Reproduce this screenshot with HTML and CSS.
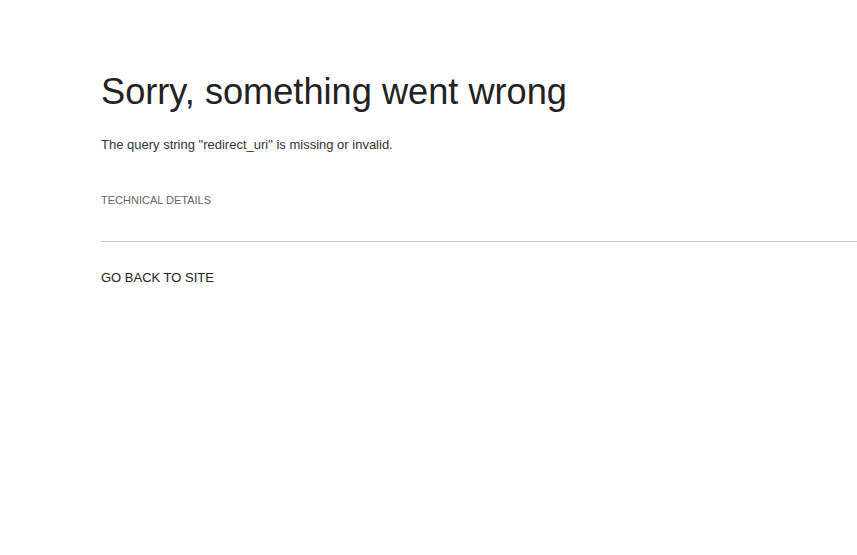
FILE: index.html
```html
<!DOCTYPE html>
<html lang="en">
<head>
<meta charset="utf-8">
<title>Error</title>
<link rel="stylesheet" href="styles.css">
</head>
<body>
<main class="page">
  <h1 class="title">Sorry, something went wrong</h1>
  <p class="message">The query string "redirect_uri" is missing or invalid.</p>
  <div class="details">TECHNICAL DETAILS</div>
  <hr class="divider">
  <a class="back" href="#">GO BACK TO SITE</a>
</main>
</body>
</html>
```

FILE: styles.css
```css
html, body {
  margin: 0;
  padding: 0;
  background: #ffffff;
}

body {
  font-family: "Liberation Sans", Arial, sans-serif;
  color: #222222;
}

.page {
  display: flex;
  flex-direction: column;
  align-items: stretch;
  padding: 72px 0 0 101px;
}

.title {
  margin: 0;
  font-size: 36.2px;
  line-height: 40px;
  font-weight: normal;
  color: #222222;
}

.message {
  margin: 24px 0 0;
  font-size: 13px;
  line-height: 18px;
  color: #333333;
}

.details {
  margin-top: 39px;
  font-size: 11px;
  line-height: 15px;
  color: #666666;
}

.divider {
  margin: 33px 0 0;
  border: 0;
  border-top: 1px solid #cccccc;
  height: 0;
}

.back {
  margin-top: 27px;
  font-size: 13px;
  line-height: 18px;
  color: #222222;
  text-decoration: none;
  align-self: flex-start;
}
```
